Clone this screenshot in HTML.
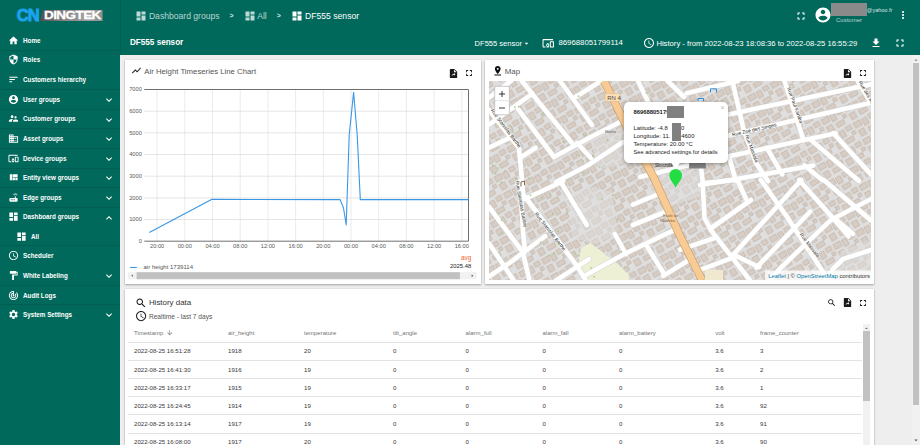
<!DOCTYPE html>
<html><head><meta charset="utf-8">
<style>
*{margin:0;padding:0;box-sizing:border-box}
html,body{width:920px;height:445px;overflow:hidden;background:#eeeeee;font-family:"Liberation Sans",sans-serif}
.a{position:absolute}
.t{position:absolute;white-space:nowrap;line-height:1}
svg.i{position:absolute;display:block}
#side{left:0;top:0;width:120px;height:445px;background:#00695c}
#top{left:120px;top:0;width:800px;height:54.7px;background:#00695c}
.sep{position:absolute;left:0;width:120px;height:1px;background:rgba(0,0,0,0.1)}
.si{position:absolute;font-size:6.3px;font-weight:bold;color:#fff;white-space:nowrap;line-height:1}
.card{position:absolute;background:#fff;box-shadow:0 1px 2px rgba(0,0,0,.3),0 0 1px rgba(0,0,0,.18)}

</style></head><body>
<div id="side" class="a">
<div class="sep" style="top:49.5px"></div>
<div class="sep" style="top:89.0px"></div>
<div class="sep" style="top:108.7px"></div>
<div class="sep" style="top:128.4px"></div>
<div class="sep" style="top:147.9px"></div>
<div class="sep" style="top:167.7px"></div>
<div class="sep" style="top:187.2px"></div>
<div class="sep" style="top:206.8px"></div>
<div class="sep" style="top:245.4px"></div>
<div class="sep" style="top:285.0px"></div>
<div class="sep" style="top:304.2px"></div>
<svg class="i" style="left:8px;top:34.5px" width="11" height="11" viewBox="0 0 24 24"><path fill="#fff" d="M10 20v-6h4v6h5v-8h3L12 3 2 12h3v8z"/></svg>
<div class="si" style="left:23px;top:37.5px">Home</div>
<svg class="i" style="left:8px;top:54.3px" width="11" height="11" viewBox="0 0 24 24"><path fill="#fff" d="M12 1L3 5v6c0 5.55 3.84 10.74 9 12 5.16-1.26 9-6.450 9-12V5l-9-4zm0 10.99h7c-.53 4.12-3.28 7.79-7 8.94V12H5V6.3l7-3.11v8.8z"/></svg>
<div class="si" style="left:23px;top:57.3px">Roles</div>
<svg class="i" style="left:8px;top:74.0px" width="11" height="11" viewBox="0 0 24 24"><path fill="#fff" d="M3 18h6v-2H3v2zM3 6v2h18V6H3zm0 7h12v-2H3v2z"/></svg>
<div class="si" style="left:23px;top:77.0px">Customers hierarchy</div>
<svg class="i" style="left:8px;top:93.7px" width="11" height="11" viewBox="0 0 24 24"><path fill="#fff" d="M12 2C6.48 2 2 6.48 2 12s4.48 10 10 10 10-4.48 10-10S17.52 2 12 2zm0 3c1.66 0 3 1.340 3 3s-1.34 3-3 3-3-1.34-3-3 1.34-3 3-3zm0 14.2c-2.5 0-4.71-1.28-6-3.22.03-1.99 4-3.08 6-3.08 1.99 0 5.97 1.09 6 3.08-1.29 1.94-3.5 3.22-6 3.22z"/></svg>
<div class="si" style="left:23px;top:96.7px">User groups</div>
<svg class="i" style="left:102.5px;top:93.9px" width="12" height="12" viewBox="0 0 24 24"><path fill="#fff" d="M16.59 8.59L12 13.17 7.41 8.59 6 10l6 6 6-6z"/></svg>
<svg class="i" style="left:8px;top:113.3px" width="11" height="11" viewBox="0 0 24 24"><path fill="#fff" d="M16.5 12c1.38 0 2.49-1.12 2.49-2.5S17.88 7 16.5 7C15.12 7 14 8.12 14 9.5s1.12 2.5 2.5 2.5zM9 11c1.66 0 2.99-1.34 2.99-3S10.66 5 9 5C7.34 5 6 6.34 6 8s1.34 3 3 3zm7.5 3c-1.83 0-5.5.92-5.5 2.75V19h11v-2.25c0-1.83-3.67-2.75-5.5-2.75zM9 13c-2.33 0-7 1.17-7 3.5V19h7v-2.25c0-.85.33-2.34 2.37-3.47C10.5 13.1 9.66 13 9 13z"/></svg>
<div class="si" style="left:23px;top:116.3px">Customer groups</div>
<svg class="i" style="left:102.5px;top:113.5px" width="12" height="12" viewBox="0 0 24 24"><path fill="#fff" d="M16.59 8.59L12 13.17 7.41 8.59 6 10l6 6 6-6z"/></svg>
<svg class="i" style="left:8px;top:132.9px" width="11" height="11" viewBox="0 0 24 24"><path fill="#fff" d="M12 7V3H2v18h20V7H12zM6 19H4v-2h2v2zm0-4H4v-2h2v2zm0-4H4V9h2v2zm0-4H4V5h2v2zm4 12H8v-2h2v2zm0-4H8v-2h2v2zm0-4H8V9h2v2zm0-4H8V5h2v2zm10 12h-8v-2h2v-2h-2v-2h2v-2h-2V9h8v10zm-2-8h-2v2h2v-2zm0 4h-2v2h2v-2z"/></svg>
<div class="si" style="left:23px;top:135.9px">Asset groups</div>
<svg class="i" style="left:102.5px;top:133.1px" width="12" height="12" viewBox="0 0 24 24"><path fill="#fff" d="M16.59 8.59L12 13.17 7.41 8.59 6 10l6 6 6-6z"/></svg>
<svg class="i" style="left:8px;top:152.5px" width="11" height="11" viewBox="0 0 24 24"><path fill="#fff" d="M3 6h18V4H3c-1.1 0-2 .9-2 2v12c0 1.1.9 2 2 2h4v-2H3V6zm10 6H9v1.78c-.61.55-1 1.33-1 2.22s.39 1.67 1 2.22V20h4v-1.78c.61-.55 1-1.34 1-2.22s-.39-1.67-1-2.22V12zm-2 5.5c-.83 0-1.5-.67-1.5-1.5s.67-1.5 1.5-1.5 1.5.67 1.5 1.5-.67 1.5-1.5 1.5zM22 8h-6c-.5 0-1 .5-1 1v10c0 .5.5 1 1 1h6c.5 0 1-.5 1-1V9c0-.5-.5-1-1-1zm-1 10h-4v-8h4v8z"/></svg>
<div class="si" style="left:23px;top:155.5px">Device groups</div>
<svg class="i" style="left:102.5px;top:152.7px" width="12" height="12" viewBox="0 0 24 24"><path fill="#fff" d="M16.59 8.59L12 13.17 7.41 8.59 6 10l6 6 6-6z"/></svg>
<svg class="i" style="left:8px;top:172.1px" width="11" height="11" viewBox="0 0 24 24"><path fill="#fff" d="M10 18h5v-6h-5v6zm-6 0h5V5H4v13zm12 0h5v-6h-5v6zM10 5v6h11V5H10z"/></svg>
<div class="si" style="left:23px;top:175.1px">Entity view groups</div>
<svg class="i" style="left:102.5px;top:172.3px" width="12" height="12" viewBox="0 0 24 24"><path fill="#fff" d="M16.59 8.59L12 13.17 7.41 8.59 6 10l6 6 6-6z"/></svg>
<svg class="i" style="left:8px;top:191.7px" width="11" height="11" viewBox="0 0 24 24"><path fill="#fff" d="M20.2 5.9l.8-.8C19.6 3.7 17.8 3 16 3s-3.6.7-5 2.1l.8.8C13 4.8 14.5 4.2 16 4.2s3 .6 4.2 1.700zm-.9.8c-.9-.9-2.1-1.4-3.3-1.4s-2.4.5-3.3 1.4l.8.8c.7-.7 1.6-1 2.5-1 .9 0 1.8.3 2.5 1l.8-.8zM19 13h-2V9h-2v4H5c-1.1 0-2 .9-2 2v4c0 1.1.9 2 2 2h14c1.1 0 2-.9 2-2v-4c0-1.1-.9-2-2-2zM8 18H6v-2h2v2zm3.5 0h-2v-2h2v2zm3.5 0h-2v-2h2v2z"/></svg>
<div class="si" style="left:23px;top:194.7px">Edge groups</div>
<svg class="i" style="left:102.5px;top:191.9px" width="12" height="12" viewBox="0 0 24 24"><path fill="#fff" d="M16.59 8.59L12 13.17 7.41 8.59 6 10l6 6 6-6z"/></svg>
<svg class="i" style="left:8px;top:211.3px" width="11" height="11" viewBox="0 0 24 24"><path fill="#fff" d="M3 13h8V3H3v10zm0 8h8v-6H3v6zm10 0h8V11h-8v10zm0-18v6h8V3h-8z"/></svg>
<div class="si" style="left:23px;top:214.3px">Dashboard groups</div>
<svg class="i" style="left:102.5px;top:211.5px" width="12" height="12" viewBox="0 0 24 24"><path fill="#fff" d="M12 8l-6 6 1.41 1.41L12 10.83l4.59 4.58L18 14z"/></svg>
<svg class="i" style="left:16px;top:230.7px" width="11" height="11" viewBox="0 0 24 24"><path fill="#fff" d="M3 13h8V3H3v10zm0 8h8v-6H3v6zm10 0h8V11h-8v10zm0-18v6h8V3h-8z"/></svg>
<div class="si" style="left:31px;top:233.7px">All</div>
<svg class="i" style="left:8px;top:250.1px" width="11" height="11" viewBox="0 0 24 24"><path fill="#fff" d="M11.99 2C6.47 2 2 6.48 2 12s4.47 10 9.99 10C17.52 22 22 17.52 22 12S17.52 2 11.99 2zM12 20c-4.42 0-8-3.58-8-8s3.58-8 8-8 8 3.58 8 8-3.58 8-8 8zm.5-13H11v6l5.25 3.15.75-1.23-4.5-2.67z"/></svg>
<div class="si" style="left:23px;top:253.1px">Scheduler</div>
<svg class="i" style="left:8px;top:269.8px" width="11" height="11" viewBox="0 0 24 24"><path fill="#fff" d="M18 4V3c0-.55-.45-1-1-1H5c-.55 0-1 .45-1 1v4c0 .55.45 1 1 1h12c.55 0 1-.45 1-1V6h1v4H9v11c0 .55.45 1 1 1h2c.55 0 1-.45 1-1v-9h8V4h-3z"/></svg>
<div class="si" style="left:23px;top:272.8px">White Labeling</div>
<svg class="i" style="left:102.5px;top:270.0px" width="12" height="12" viewBox="0 0 24 24"><path fill="#fff" d="M16.59 8.59L12 13.17 7.41 8.59 6 10l6 6 6-6z"/></svg>
<svg class="i" style="left:8px;top:289.5px" width="11" height="11" viewBox="0 0 24 24"><path fill="#fff" d="M19.07 4.93l-1.41 1.41C19.1 7.79 20 9.79 20 12c0 4.42-3.58 8-8 8s-8-3.58-8-8c0-4.08 3.05-7.44 7-7.93v2.02C8.16 6.57 6 9.03 6 12c0 3.31 2.69 6 6 6s6-2.690 6-6c0-1.66-.67-3.16-1.76-4.24l-1.41 1.41C15.55 9.9 16 10.9 16 12c0 2.21-1.79 4-4 4s-4-1.79-4-4c0-1.86 1.28-3.41 3-3.86v2.14c-.6.35-1 .98-1 1.72 0 1.1.9 2 2 2s2-.9 2-2c0-.74-.4-1.38-1-1.72V2h-1C6.48 2 2 6.48 2 12s4.48 10 10 10 10-4.48 10-10c0-2.76-1.12-5.26-2.93-7.070z"/></svg>
<div class="si" style="left:23px;top:292.5px">Audit Logs</div>
<svg class="i" style="left:8px;top:309.2px" width="11" height="11" viewBox="0 0 24 24"><path fill="#fff" d="M19.14 12.94c.04-.3.06-.61.06-.94 0-.32-.02-.64-.07-.94l2.03-1.58c.18-.14.23-.41.12-.61l-1.92-3.32c-.12-.22-.37-.29-.59-.22l-2.39.96c-.5-.38-1.03-.7-1.62-.94l-.36-2.54c-.04-.24-.24-.41-.48-.41h-3.84c-.24 0-.43.17-.47.41l-.36 2.54c-.59.24-1.13.57-1.62.94l-2.39-.96c-.22-.08-.47 0-.59.22L2.74 8.870c-.12.21-.08.47.12.61l2.03 1.58c-.05.3-.09.63-.09.94s.02.64.07.94l-2.03 1.58c-.18.14-.23.41-.12.61l1.92 3.32c.12.22.37.29.59.22l2.39-.96c.5.38 1.03.7 1.62.94l.36 2.54c.05.24.24.41.48.41h3.84c.24 0 .44-.17.47-.41l.36-2.54c.59-.24 1.13-.56 1.62-.94l2.39.96c.22.08.47 0 .59-.22l1.92-3.32c.12-.22.07-.47-.12-.61l-2.01-1.58zM12 15.6c-1.98 0-3.6-1.62-3.6-3.6s1.62-3.6 3.6-3.6 3.6 1.62 3.6 3.6-1.62 3.6-3.6 3.6z"/></svg>
<div class="si" style="left:23px;top:312.2px">System Settings</div>
<svg class="i" style="left:102.5px;top:309.4px" width="12" height="12" viewBox="0 0 24 24"><path fill="#fff" d="M16.59 8.59L12 13.17 7.41 8.59 6 10l6 6 6-6z"/></svg>
</div>
<div id="top" class="a"></div>
<div class="a" style="left:119.5px;top:0;width:1px;height:54.7px;background:rgba(0,0,0,0.08)"></div>
<!-- logo -->
<div class="t" style="left:16.8px;top:7.2px;font-size:16.5px;font-weight:bold;color:#1ba3ee;letter-spacing:-0.9px;-webkit-text-stroke:0.9px #1ba3ee">CN</div>
<div class="a" style="left:39.6px;top:9.6px;width:63px;height:11.6px;background:linear-gradient(90deg,#4f4f4f,#8a8a8a 45%,#a0a0a0 80%,#8c8c8c);clip-path:polygon(3.5px 0,100% 0,100% 100%,0 100%)"></div>
<div class="t" style="left:43.8px;top:10px;font-size:11.8px;font-weight:bold;color:#fff;letter-spacing:-0.5px;-webkit-text-stroke:0.3px #fff;transform:scaleX(1.145);transform-origin:0 0">DINGTEK</div>
<!-- breadcrumb -->
<svg class="i" style="left:134.6px;top:9.8px" width="12" height="12" viewBox="0 0 24 24"><path fill="rgba(255,255,255,0.75)" d="M3 13h8V3H3v10zm0 8h8v-6H3v6zm10 0h8V11h-8v10zm0-18v6h8V3h-8z"/></svg>
<div class="t" style="left:148.9px;top:11.8px;font-size:8.6px;color:rgba(255,255,255,0.72)">Dashboard groups</div>
<div class="t" style="left:229.5px;top:11.5px;font-size:7px;font-weight:bold;color:rgba(255,255,255,0.85)">&gt;</div>
<svg class="i" style="left:243.5px;top:9.8px" width="12" height="12" viewBox="0 0 24 24"><path fill="rgba(255,255,255,0.75)" d="M3 13h8V3H3v10zm0 8h8v-6H3v6zm10 0h8V11h-8v10zm0-18v6h8V3h-8z"/></svg>
<div class="t" style="left:257.2px;top:11.8px;font-size:8.6px;color:rgba(255,255,255,0.72)">All</div>
<div class="t" style="left:276.8px;top:11.5px;font-size:7px;font-weight:bold;color:rgba(255,255,255,0.85)">&gt;</div>
<svg class="i" style="left:290.8px;top:9.8px" width="12" height="12" viewBox="0 0 24 24"><path fill="#fff" d="M3 13h8V3H3v10zm0 8h8v-6H3v6zm10 0h8V11h-8v10zm0-18v6h8V3h-8z"/></svg>
<div class="t" style="left:305.1px;top:11.8px;font-size:8.6px;color:#fff">DF555 sensor</div>
<!-- top right -->
<svg class="i" style="left:795.3px;top:9.5px" width="12" height="12" viewBox="0 0 24 24"><path fill="#fff" d="M7 14H5v5h5v-2H7v-3zm-2-4h2V7h3V5H5v5zm12 7h-3v2h5v-5h-2v3zM14 5v2h3v3h2V5h-5z"/></svg>
<svg class="i" style="left:814px;top:6.2px" width="18" height="18" viewBox="0 0 24 24"><path fill="#fff" d="M12 2C6.48 2 2 6.48 2 12s4.48 10 10 10 10-4.48 10-10S17.52 2 12 2zm0 3c1.66 0 3 1.34 3 3s-1.34 3-3 3-3-1.34-3-3 1.34-3 3-3zm0 14.2c-2.5 0-4.71-1.28-6-3.22.03-1.99 4-3.08 6-3.08 1.99 0 5.97 1.09 6 3.08-1.29 1.94-3.5 3.22-6 3.22z"/></svg>
<div class="a" style="left:831px;top:3.1px;width:36px;height:12.7px;background:#8a8a8a"></div>
<div class="t" style="left:866.8px;top:8.2px;font-size:5.5px;color:rgba(255,255,255,0.85)">@yahoo.fr</div>
<div class="t" style="left:836px;top:17px;font-size:6px;color:rgba(255,255,255,0.7)">Customer</div>
<svg class="i" style="left:897px;top:9.2px" width="12" height="12" viewBox="0 0 24 24"><path fill="#fff" d="M12 8c1.1 0 2-.9 2-2s-.9-2-2-2-2 .9-2 2 .9 2 2 2zm0 2c-1.1 0-2 .9-2 2s.9 2 2 2 2-.9 2-2-.9-2-2-2zm0 6c-1.1 0-2 .9-2 2s.9 2 2 2 2-.9 2-2-.9-2-2-2z"/></svg>
<!-- toolbar -->
<div class="t" style="left:129.9px;top:38.3px;font-size:8.9px;font-weight:bold;color:#fff;transform:scaleX(0.915);transform-origin:0 0">DF555 sensor</div>
<div class="t" style="left:474.6px;top:39.6px;font-size:7.56px;color:#fff">DF555 sensor</div>
<svg class="i" style="left:521.9px;top:38.8px" width="9" height="9" viewBox="0 0 24 24"><path fill="#fff" d="M7 10l5 5 5-5z"/></svg>
<svg class="i" style="left:542.2px;top:37.2px" width="12.5" height="12.5" viewBox="0 0 24 24"><path fill="#fff" d="M3 6h18V4H3c-1.1 0-2 .9-2 2v12c0 1.1.9 2 2 2h4v-2H3V6zm10 6H9v1.78c-.61.55-1 1.33-1 2.22s.39 1.67 1 2.22V20h4v-1.78c.61-.55 1-1.34 1-2.22s-.39-1.670-1-2.22V12zm-2 5.5c-.83 0-1.5-.67-1.5-1.5s.67-1.5 1.5-1.5 1.5.67 1.5 1.5-.67 1.5-1.5 1.5zM22 8h-6c-.5 0-1 .5-1 1v10c0 .5.5 1 1 1h6c.5 0 1-.5 1-1V9c0-.5-.5-1-1-1zm-1 10h-4v-8h4v8z"/></svg>
<div class="t" style="left:558.4px;top:39.4px;font-size:7.8px;color:#fff">869688051799114</div>
<svg class="i" style="left:642.5px;top:37px" width="12" height="12" viewBox="0 0 24 24"><path fill="#fff" d="M11.99 2C6.47 2 2 6.48 2 12s4.47 10 9.99 10C17.52 22 22 17.52 22 12S17.52 2 11.99 2zM12 20c-4.42 0-8-3.58-8-8s3.58-8 8-8 8 3.58 8 8-3.58 8-8 8zm.5-13H11v6l5.25 3.15.75-1.23-4.5-2.67z"/></svg>
<div id="hist" class="t" style="left:656.4px;top:39.5px;font-size:7.67px;color:#fff">History - from 2022-08-23 18:08:36 to 2022-08-25 16:55:29</div>
<svg class="i" style="left:869.7px;top:37px" width="12" height="12" viewBox="0 0 24 24"><path fill="#fff" d="M19 9h-4V3H9v6H5l7 7 7-7zM5 18v2h14v-2H5z"/></svg>
<svg class="i" style="left:894.3px;top:37px" width="12" height="12" viewBox="0 0 24 24"><path fill="#fff" d="M7 14H5v5h5v-2H7v-3zm-2-4h2V7h3V5H5v5zm12 7h-3v2h5v-5h-2v3zM14 5v2h3v3h2V5h-5z"/></svg>
<div class="card" style="left:124.8px;top:59.7px;width:356px;height:224.1px"></div>
<svg class="i" style="left:131px;top:65.4px" width="10.9" height="10.9" viewBox="0 0 24 24"><path fill="#222" d="M3.5 18.49l6-6.01 4 4L22 6.92l-1.41-1.41-7.090 7.97-4-4L2 16.99z"/></svg>
<div class="t m" style="left:144.3px;top:68.1px;font-size:7.77px;color:#555">Air Height Timeseries Line Chart</div>
<svg class="i" style="left:447.9px;top:68.1px" width="11" height="11" viewBox="0 0 24 24"><path fill="#1a1a1a" d="M6 2c-1.1 0-2 .9-2 2v16c0 1.1.9 2 2 2h12c1.1 0 2-.9 2-2V8l-6-6H6zm7 1.5L18.5 9H13V3.5z"/><path fill="#fff" d="M8 17.5c1.5-1.2 2.8-2.6 5-2.6v1.8l3-2.9-3-2.9v1.8c-3 .4-4.6 2.4-5 4.8z"/></svg>
<svg class="i" style="left:464px;top:67.9px" width="10" height="10" viewBox="0 0 24 24"><path fill="#1a1a1a" d="M7 14H5v5h5v-2H7v-3zm-2-4h2V7h3V5H5v5zm12 7h-3v2h5v-5h-2v3zM14 5v2h3v3h2V5h-5z"/></svg>
<svg class="i" style="left:0;top:0" width="920" height="445" viewBox="0 0 920 445">
<line x1="157.1" y1="89.5" x2="157.1" y2="241.2" stroke="#e6e6e6" stroke-width="0.8"/>
<line x1="184.8" y1="89.5" x2="184.8" y2="241.2" stroke="#e6e6e6" stroke-width="0.8"/>
<line x1="212.5" y1="89.5" x2="212.5" y2="241.2" stroke="#e6e6e6" stroke-width="0.8"/>
<line x1="240.2" y1="89.5" x2="240.2" y2="241.2" stroke="#e6e6e6" stroke-width="0.8"/>
<line x1="267.9" y1="89.5" x2="267.9" y2="241.2" stroke="#e6e6e6" stroke-width="0.8"/>
<line x1="295.6" y1="89.5" x2="295.6" y2="241.2" stroke="#e6e6e6" stroke-width="0.8"/>
<line x1="323.3" y1="89.5" x2="323.3" y2="241.2" stroke="#e6e6e6" stroke-width="0.8"/>
<line x1="351.0" y1="89.5" x2="351.0" y2="241.2" stroke="#e6e6e6" stroke-width="0.8"/>
<line x1="378.7" y1="89.5" x2="378.7" y2="241.2" stroke="#e6e6e6" stroke-width="0.8"/>
<line x1="406.4" y1="89.5" x2="406.4" y2="241.2" stroke="#e6e6e6" stroke-width="0.8"/>
<line x1="434.1" y1="89.5" x2="434.1" y2="241.2" stroke="#e6e6e6" stroke-width="0.8"/>
<line x1="461.8" y1="89.5" x2="461.8" y2="241.2" stroke="#e6e6e6" stroke-width="0.8"/>
<line x1="144.3" y1="219.5" x2="468.5" y2="219.5" stroke="#dedede" stroke-width="0.8"/>
<line x1="144.3" y1="197.9" x2="468.5" y2="197.9" stroke="#dedede" stroke-width="0.8"/>
<line x1="144.3" y1="176.2" x2="468.5" y2="176.2" stroke="#dedede" stroke-width="0.8"/>
<line x1="144.3" y1="154.5" x2="468.5" y2="154.5" stroke="#dedede" stroke-width="0.8"/>
<line x1="144.3" y1="132.8" x2="468.5" y2="132.8" stroke="#dedede" stroke-width="0.8"/>
<line x1="144.3" y1="111.2" x2="468.5" y2="111.2" stroke="#dedede" stroke-width="0.8"/>
<path d="M144.3 89.5H468.5V241.2H144.3" fill="none" stroke="#6f6f6f" stroke-width="1"/>
<polyline fill="none" stroke="#3a97e6" stroke-width="1.1" stroke-linejoin="round" points="149.3,232.4 211.5,199.4 340.1,199.6 343.5,208 346.2,224.9 349.2,135 353.6,92.4 357.2,135 360.3,199.6 468.3,199.6"/>
<line x1="130.1" y1="267.5" x2="136.9" y2="267.5" stroke="#3a97e6" stroke-width="1.1"/>
<rect x="127.8" y="272.2" width="348.8" height="7" fill="#f1f1f1"/>
<rect x="136.6" y="272.2" width="323.3" height="7" fill="#c1c1c1"/>
<path d="M132.9 274.6 L131.3 275.7 L132.9 276.8z" fill="#555"/>
<path d="M471.6 274.4 L473.4 275.7 L471.6 277z" fill="#555"/>
</svg>
<div class="t m" style="right:778.2px;top:239.0px;font-size:5.7px;color:#5a5a5a">0</div>
<div class="t m" style="right:778.2px;top:217.3px;font-size:5.7px;color:#5a5a5a">1000</div>
<div class="t m" style="right:778.2px;top:195.7px;font-size:5.7px;color:#5a5a5a">2000</div>
<div class="t m" style="right:778.2px;top:174.0px;font-size:5.7px;color:#5a5a5a">3000</div>
<div class="t m" style="right:778.2px;top:152.3px;font-size:5.7px;color:#5a5a5a">4000</div>
<div class="t m" style="right:778.2px;top:130.6px;font-size:5.7px;color:#5a5a5a">5000</div>
<div class="t m" style="right:778.2px;top:109.0px;font-size:5.7px;color:#5a5a5a">6000</div>
<div class="t m" style="right:778.2px;top:87.3px;font-size:5.7px;color:#5a5a5a">7000</div>
<div class="t m" style="left:149.9px;width:14.4px;text-align:center;top:244.0px;font-size:5.7px;color:#5a5a5a">20:00</div>
<div class="t m" style="left:177.6px;width:14.4px;text-align:center;top:244.0px;font-size:5.7px;color:#5a5a5a">00:00</div>
<div class="t m" style="left:205.3px;width:14.4px;text-align:center;top:244.0px;font-size:5.7px;color:#5a5a5a">04:00</div>
<div class="t m" style="left:233.0px;width:14.4px;text-align:center;top:244.0px;font-size:5.7px;color:#5a5a5a">08:00</div>
<div class="t m" style="left:260.7px;width:14.4px;text-align:center;top:244.0px;font-size:5.7px;color:#5a5a5a">12:00</div>
<div class="t m" style="left:288.4px;width:14.4px;text-align:center;top:244.0px;font-size:5.7px;color:#5a5a5a">16:00</div>
<div class="t m" style="left:316.1px;width:14.4px;text-align:center;top:244.0px;font-size:5.7px;color:#5a5a5a">20:00</div>
<div class="t m" style="left:343.8px;width:14.4px;text-align:center;top:244.0px;font-size:5.7px;color:#5a5a5a">00:00</div>
<div class="t m" style="left:371.5px;width:14.4px;text-align:center;top:244.0px;font-size:5.7px;color:#5a5a5a">04:00</div>
<div class="t m" style="left:399.2px;width:14.4px;text-align:center;top:244.0px;font-size:5.7px;color:#5a5a5a">08:00</div>
<div class="t m" style="left:426.9px;width:14.4px;text-align:center;top:244.0px;font-size:5.7px;color:#5a5a5a">12:00</div>
<div class="t m" style="left:454.6px;width:14.4px;text-align:center;top:244.0px;font-size:5.7px;color:#5a5a5a">16:00</div>
<div class="t m" style="left:143.5px;top:264.1px;font-size:6.04px;color:#555">air height 1739114</div>
<div class="t m" style="right:448.8px;top:254.6px;font-size:6.4px;color:#f0642d">avg</div>
<div class="t m" style="right:448.8px;top:264.4px;font-size:5.9px;color:#222">2025.48</div><div class="card" style="left:485.2px;top:59.7px;width:388.8px;height:224.1px"></div>
<svg class="i" style="left:492.2px;top:64.6px" width="11.5" height="11.5" viewBox="0 0 24 24"><path fill="#111" d="M18 8c0-3.31-2.69-6-6-6S6 4.69 6 8c0 4.5 6 11 6 11s6-6.5 6-11zm-8 0c0-1.1.9-2 2-2s2 .9 2 2-.89 2-2 2c-1.1 0-2-.9-2-2zM5 20v2h14v-2H5z"/></svg>
<div class="t m" style="left:504.8px;top:67.6px;font-size:7.9px;color:#555">Map</div>
<svg class="i" style="left:841.8px;top:68.2px" width="11" height="11" viewBox="0 0 24 24"><path fill="#1a1a1a" d="M6 2c-1.1 0-2 .9-2 2v16c0 1.1.9 2 2 2h12c1.1 0 2-.9 2-2V8l-6-6H6zm7 1.5L18.5 9H13V3.5z"/><path fill="#fff" d="M8 17.5c1.5-1.2 2.8-2.6 5-2.6v1.8l3-2.9-3-2.9v1.8c-3 .4-4.6 2.4-5 4.8z"/></svg>
<svg class="i" style="left:857.9px;top:68px" width="10" height="10" viewBox="0 0 24 24"><path fill="#1a1a1a" d="M7 14H5v5h5v-2H7v-3zm-2-4h2V7h3V5H5v5zm12 7h-3v2h5v-5h-2v3zM14 5v2h3v3h2V5h-5z"/></svg>
<svg class="i" style="left:489px;top:81px" width="382" height="199" viewBox="489 81 382 199">
<defs>
<pattern id="bld" width="26" height="19" patternUnits="userSpaceOnUse" patternTransform="rotate(-30)">
<rect x="1" y="1.5" width="7.5" height="5.5" fill="#d7cdc4" stroke="#c2b4a8" stroke-width="0.7"/>
<rect x="10.5" y="2" width="5" height="7" fill="#d7cdc4" stroke="#c2b4a8" stroke-width="0.7"/>
<rect x="18" y="1" width="6" height="4.5" fill="#d7cdc4" stroke="#c2b4a8" stroke-width="0.7"/>
<rect x="2" y="10.5" width="6" height="6.5" fill="#d7cdc4" stroke="#c2b4a8" stroke-width="0.7"/>
<rect x="12" y="12" width="8.5" height="4.5" fill="#d7cdc4" stroke="#c2b4a8" stroke-width="0.7"/>
<rect x="21.5" y="8" width="3.5" height="3.5" fill="#d7cdc4" stroke="#c2b4a8" stroke-width="0.7"/>
</pattern>
<clipPath id="mc"><rect x="489" y="81" width="382" height="199"/></clipPath>
</defs>
<rect x="489" y="81" width="382" height="199" fill="#e0dfdf"/>
<rect x="489" y="81" width="382" height="199" fill="url(#bld)"/>
<polygon points="566,195 590,186 612,192 618,235 596,244 572,238" fill="#e0dfdf" opacity="0.5"/>
<polygon points="645,170 668,166 700,172 702,196 676,204 650,200" fill="#e0dfdf" opacity="0.5"/>
<polygon points="590,140 626,125 640,160 598,170" fill="#e0dfdf" opacity="0.5"/>
<polygon points="842,250 871,240 871,280 830,280" fill="#e0dfdf" opacity="0.5"/>
<path d="M578 266 L581 248 L590 243 L596 247 L610 258 L618 264 L628 274 L630 281 L584 281 Z" fill="#eef0d5"/>
<polyline points="522,81 537,100 572,143" fill="none" stroke="#d4d2d0" stroke-width="5.6" stroke-linecap="round" stroke-linejoin="round"/>
<polyline points="518,109 554,157" fill="none" stroke="#d4d2d0" stroke-width="5.6" stroke-linecap="round" stroke-linejoin="round"/>
<polyline points="560,81 592,125" fill="none" stroke="#d4d2d0" stroke-width="5.6" stroke-linecap="round" stroke-linejoin="round"/>
<polyline points="574,98 601,81" fill="none" stroke="#d4d2d0" stroke-width="5.6" stroke-linecap="round" stroke-linejoin="round"/>
<polyline points="554,157 589,138 622,121 650,106" fill="none" stroke="#d4d2d0" stroke-width="5.6" stroke-linecap="round" stroke-linejoin="round"/>
<polyline points="556,182 589,164.7 623,142" fill="none" stroke="#d4d2d0" stroke-width="5.6" stroke-linecap="round" stroke-linejoin="round"/>
<polyline points="640,177 702,162" fill="none" stroke="#d4d2d0" stroke-width="5.6" stroke-linecap="round" stroke-linejoin="round"/>
<polyline points="638,81 650,106" fill="none" stroke="#d4d2d0" stroke-width="5.6" stroke-linecap="round" stroke-linejoin="round"/>
<polyline points="667.7,81 684,97" fill="none" stroke="#d4d2d0" stroke-width="5.6" stroke-linecap="round" stroke-linejoin="round"/>
<polyline points="577,143 591,158" fill="none" stroke="#d4d2d0" stroke-width="5.6" stroke-linecap="round" stroke-linejoin="round"/>
<polyline points="489.3,124.5 532.5,93.5" fill="none" stroke="#d4d2d0" stroke-width="5.6" stroke-linecap="round" stroke-linejoin="round"/>
<polyline points="489,97.7 511,81" fill="none" stroke="#d4d2d0" stroke-width="5.6" stroke-linecap="round" stroke-linejoin="round"/>
<polyline points="489,110 519,148 522,180 523,194 576.6,265.4 585.6,280" fill="none" stroke="#d4d2d0" stroke-width="5.6" stroke-linecap="round" stroke-linejoin="round"/>
<polyline points="489,147.7 510,137.7" fill="none" stroke="#d4d2d0" stroke-width="5.6" stroke-linecap="round" stroke-linejoin="round"/>
<polyline points="522,156.6 535.7,147.7" fill="none" stroke="#d4d2d0" stroke-width="5.6" stroke-linecap="round" stroke-linejoin="round"/>
<polyline points="525,199 563.2,181.1" fill="none" stroke="#d4d2d0" stroke-width="5.6" stroke-linecap="round" stroke-linejoin="round"/>
<polyline points="560.9,182.2 586.8,225" fill="none" stroke="#d4d2d0" stroke-width="5.6" stroke-linecap="round" stroke-linejoin="round"/>
<polyline points="489,207 522.7,252 529.4,280" fill="none" stroke="#d4d2d0" stroke-width="5.6" stroke-linecap="round" stroke-linejoin="round"/>
<polyline points="489,276.6 509.2,263.1 545.2,236.2" fill="none" stroke="#d4d2d0" stroke-width="5.6" stroke-linecap="round" stroke-linejoin="round"/>
<polyline points="555.3,281 589,259" fill="none" stroke="#d4d2d0" stroke-width="5.6" stroke-linecap="round" stroke-linejoin="round"/>
<polyline points="489,243.4 513.7,280.4" fill="none" stroke="#d4d2d0" stroke-width="5.6" stroke-linecap="round" stroke-linejoin="round"/>
<polyline points="520,181 523,231 525,252" fill="none" stroke="#d4d2d0" stroke-width="5.6" stroke-linecap="round" stroke-linejoin="round"/>
<polyline points="583.4,276.6 623.8,254.2 675.5,229.4" fill="none" stroke="#d4d2d0" stroke-width="5.6" stroke-linecap="round" stroke-linejoin="round"/>
<polyline points="614.8,234 626,254.2" fill="none" stroke="#d4d2d0" stroke-width="5.6" stroke-linecap="round" stroke-linejoin="round"/>
<polyline points="632.8,204.7 659.8,193.5" fill="none" stroke="#d4d2d0" stroke-width="5.6" stroke-linecap="round" stroke-linejoin="round"/>
<polyline points="632.8,225 666.5,211.5" fill="none" stroke="#d4d2d0" stroke-width="5.6" stroke-linecap="round" stroke-linejoin="round"/>
<polyline points="646.3,245.2 664.3,274.4" fill="none" stroke="#d4d2d0" stroke-width="5.6" stroke-linecap="round" stroke-linejoin="round"/>
<polyline points="663,276 689,260" fill="none" stroke="#d4d2d0" stroke-width="5.6" stroke-linecap="round" stroke-linejoin="round"/>
<polyline points="686.7,93.2 737.8,81" fill="none" stroke="#d4d2d0" stroke-width="5.6" stroke-linecap="round" stroke-linejoin="round"/>
<polyline points="728.9,114.4 871,84.3" fill="none" stroke="#d4d2d0" stroke-width="5.6" stroke-linecap="round" stroke-linejoin="round"/>
<polyline points="700,141 728.9,135.5 869,103.2" fill="none" stroke="#d4d2d0" stroke-width="5.6" stroke-linecap="round" stroke-linejoin="round"/>
<polyline points="700,162 727.8,156.6 835.7,133.3" fill="none" stroke="#d4d2d0" stroke-width="5.6" stroke-linecap="round" stroke-linejoin="round"/>
<polyline points="700,185 731,180 813.4,165.5" fill="none" stroke="#d4d2d0" stroke-width="5.6" stroke-linecap="round" stroke-linejoin="round"/>
<polyline points="732.3,81 744,131 756,163 768,181" fill="none" stroke="#d4d2d0" stroke-width="5.6" stroke-linecap="round" stroke-linejoin="round"/>
<polyline points="784.5,81 803.4,139.9" fill="none" stroke="#d4d2d0" stroke-width="5.6" stroke-linecap="round" stroke-linejoin="round"/>
<polyline points="857.9,81 871,103.2" fill="none" stroke="#d4d2d0" stroke-width="5.6" stroke-linecap="round" stroke-linejoin="round"/>
<polyline points="833.4,133.3 871,174.4" fill="none" stroke="#d4d2d0" stroke-width="5.6" stroke-linecap="round" stroke-linejoin="round"/>
<polyline points="766.7,147.7 782.3,174.4" fill="none" stroke="#d4d2d0" stroke-width="5.6" stroke-linecap="round" stroke-linejoin="round"/>
<polyline points="804.5,165.5 822.3,180" fill="none" stroke="#d4d2d0" stroke-width="5.6" stroke-linecap="round" stroke-linejoin="round"/>
<polyline points="799.1,180 835,220.4 848.5,236.2" fill="none" stroke="#d4d2d0" stroke-width="5.6" stroke-linecap="round" stroke-linejoin="round"/>
<polyline points="700.5,163 702.5,180 704.5,218 711.5,231 749.7,280" fill="none" stroke="#d4d2d0" stroke-width="5.6" stroke-linecap="round" stroke-linejoin="round"/>
<polyline points="702.5,183.4 734,180" fill="none" stroke="#d4d2d0" stroke-width="5.6" stroke-linecap="round" stroke-linejoin="round"/>
<polyline points="738,181 746,199" fill="none" stroke="#d4d2d0" stroke-width="5.6" stroke-linecap="round" stroke-linejoin="round"/>
<polyline points="736,256 759,267" fill="none" stroke="#d4d2d0" stroke-width="5.6" stroke-linecap="round" stroke-linejoin="round"/>
<polyline points="811,140 859,181" fill="none" stroke="#d4d2d0" stroke-width="5.6" stroke-linecap="round" stroke-linejoin="round"/>
<polyline points="729,157 736,181" fill="none" stroke="#d4d2d0" stroke-width="5.6" stroke-linecap="round" stroke-linejoin="round"/>
<polyline points="710,229 751,200" fill="none" stroke="#d4d2d0" stroke-width="5.6" stroke-linecap="round" stroke-linejoin="round"/>
<polyline points="731.7,256.4 801.3,180" fill="none" stroke="#d4d2d0" stroke-width="5.6" stroke-linecap="round" stroke-linejoin="round"/>
<polyline points="760.9,180 787.9,218.2 828.3,280" fill="none" stroke="#d4d2d0" stroke-width="5.6" stroke-linecap="round" stroke-linejoin="round"/>
<polyline points="756.4,267.6 810.3,211.5" fill="none" stroke="#d4d2d0" stroke-width="5.6" stroke-linecap="round" stroke-linejoin="round"/>
<polyline points="770,280 780,268.5 830.5,220.3 871,199" fill="none" stroke="#d4d2d0" stroke-width="5.6" stroke-linecap="round" stroke-linejoin="round"/>
<polyline points="823.8,180 871,220.4" fill="none" stroke="#d4d2d0" stroke-width="5.6" stroke-linecap="round" stroke-linejoin="round"/>
<polyline points="837.3,220.4 853,233.9" fill="none" stroke="#d4d2d0" stroke-width="5.6" stroke-linecap="round" stroke-linejoin="round"/>
<polyline points="826,281 833,269 843,259 871,250" fill="none" stroke="#d4d2d0" stroke-width="5.6" stroke-linecap="round" stroke-linejoin="round"/>
<polyline points="680,249.7 713.7,238.4" fill="none" stroke="#d4d2d0" stroke-width="5.6" stroke-linecap="round" stroke-linejoin="round"/>
<polyline points="700.2,269.9 736.2,256.4" fill="none" stroke="#d4d2d0" stroke-width="5.6" stroke-linecap="round" stroke-linejoin="round"/>
<polyline points="522,81 537,100 572,143" fill="none" stroke="#ffffff" stroke-width="4.6" stroke-linecap="round" stroke-linejoin="round"/>
<polyline points="518,109 554,157" fill="none" stroke="#ffffff" stroke-width="4.6" stroke-linecap="round" stroke-linejoin="round"/>
<polyline points="560,81 592,125" fill="none" stroke="#ffffff" stroke-width="4.6" stroke-linecap="round" stroke-linejoin="round"/>
<polyline points="574,98 601,81" fill="none" stroke="#ffffff" stroke-width="4.6" stroke-linecap="round" stroke-linejoin="round"/>
<polyline points="554,157 589,138 622,121 650,106" fill="none" stroke="#ffffff" stroke-width="4.6" stroke-linecap="round" stroke-linejoin="round"/>
<polyline points="556,182 589,164.7 623,142" fill="none" stroke="#ffffff" stroke-width="4.6" stroke-linecap="round" stroke-linejoin="round"/>
<polyline points="640,177 702,162" fill="none" stroke="#ffffff" stroke-width="4.6" stroke-linecap="round" stroke-linejoin="round"/>
<polyline points="638,81 650,106" fill="none" stroke="#ffffff" stroke-width="4.6" stroke-linecap="round" stroke-linejoin="round"/>
<polyline points="667.7,81 684,97" fill="none" stroke="#ffffff" stroke-width="4.6" stroke-linecap="round" stroke-linejoin="round"/>
<polyline points="577,143 591,158" fill="none" stroke="#ffffff" stroke-width="4.6" stroke-linecap="round" stroke-linejoin="round"/>
<polyline points="489.3,124.5 532.5,93.5" fill="none" stroke="#ffffff" stroke-width="4.6" stroke-linecap="round" stroke-linejoin="round"/>
<polyline points="489,97.7 511,81" fill="none" stroke="#ffffff" stroke-width="4.6" stroke-linecap="round" stroke-linejoin="round"/>
<polyline points="489,110 519,148 522,180 523,194 576.6,265.4 585.6,280" fill="none" stroke="#ffffff" stroke-width="4.6" stroke-linecap="round" stroke-linejoin="round"/>
<polyline points="489,147.7 510,137.7" fill="none" stroke="#ffffff" stroke-width="4.6" stroke-linecap="round" stroke-linejoin="round"/>
<polyline points="522,156.6 535.7,147.7" fill="none" stroke="#ffffff" stroke-width="4.6" stroke-linecap="round" stroke-linejoin="round"/>
<polyline points="525,199 563.2,181.1" fill="none" stroke="#ffffff" stroke-width="4.6" stroke-linecap="round" stroke-linejoin="round"/>
<polyline points="560.9,182.2 586.8,225" fill="none" stroke="#ffffff" stroke-width="4.6" stroke-linecap="round" stroke-linejoin="round"/>
<polyline points="489,207 522.7,252 529.4,280" fill="none" stroke="#ffffff" stroke-width="4.6" stroke-linecap="round" stroke-linejoin="round"/>
<polyline points="489,276.6 509.2,263.1 545.2,236.2" fill="none" stroke="#ffffff" stroke-width="4.6" stroke-linecap="round" stroke-linejoin="round"/>
<polyline points="555.3,281 589,259" fill="none" stroke="#ffffff" stroke-width="4.6" stroke-linecap="round" stroke-linejoin="round"/>
<polyline points="489,243.4 513.7,280.4" fill="none" stroke="#ffffff" stroke-width="4.6" stroke-linecap="round" stroke-linejoin="round"/>
<polyline points="520,181 523,231 525,252" fill="none" stroke="#ffffff" stroke-width="4.6" stroke-linecap="round" stroke-linejoin="round"/>
<polyline points="583.4,276.6 623.8,254.2 675.5,229.4" fill="none" stroke="#ffffff" stroke-width="4.6" stroke-linecap="round" stroke-linejoin="round"/>
<polyline points="614.8,234 626,254.2" fill="none" stroke="#ffffff" stroke-width="4.6" stroke-linecap="round" stroke-linejoin="round"/>
<polyline points="632.8,204.7 659.8,193.5" fill="none" stroke="#ffffff" stroke-width="4.6" stroke-linecap="round" stroke-linejoin="round"/>
<polyline points="632.8,225 666.5,211.5" fill="none" stroke="#ffffff" stroke-width="4.6" stroke-linecap="round" stroke-linejoin="round"/>
<polyline points="646.3,245.2 664.3,274.4" fill="none" stroke="#ffffff" stroke-width="4.6" stroke-linecap="round" stroke-linejoin="round"/>
<polyline points="663,276 689,260" fill="none" stroke="#ffffff" stroke-width="4.6" stroke-linecap="round" stroke-linejoin="round"/>
<polyline points="686.7,93.2 737.8,81" fill="none" stroke="#ffffff" stroke-width="4.6" stroke-linecap="round" stroke-linejoin="round"/>
<polyline points="728.9,114.4 871,84.3" fill="none" stroke="#ffffff" stroke-width="4.6" stroke-linecap="round" stroke-linejoin="round"/>
<polyline points="700,141 728.9,135.5 869,103.2" fill="none" stroke="#ffffff" stroke-width="4.6" stroke-linecap="round" stroke-linejoin="round"/>
<polyline points="700,162 727.8,156.6 835.7,133.3" fill="none" stroke="#ffffff" stroke-width="4.6" stroke-linecap="round" stroke-linejoin="round"/>
<polyline points="700,185 731,180 813.4,165.5" fill="none" stroke="#ffffff" stroke-width="4.6" stroke-linecap="round" stroke-linejoin="round"/>
<polyline points="732.3,81 744,131 756,163 768,181" fill="none" stroke="#ffffff" stroke-width="4.6" stroke-linecap="round" stroke-linejoin="round"/>
<polyline points="784.5,81 803.4,139.9" fill="none" stroke="#ffffff" stroke-width="4.6" stroke-linecap="round" stroke-linejoin="round"/>
<polyline points="857.9,81 871,103.2" fill="none" stroke="#ffffff" stroke-width="4.6" stroke-linecap="round" stroke-linejoin="round"/>
<polyline points="833.4,133.3 871,174.4" fill="none" stroke="#ffffff" stroke-width="4.6" stroke-linecap="round" stroke-linejoin="round"/>
<polyline points="766.7,147.7 782.3,174.4" fill="none" stroke="#ffffff" stroke-width="4.6" stroke-linecap="round" stroke-linejoin="round"/>
<polyline points="804.5,165.5 822.3,180" fill="none" stroke="#ffffff" stroke-width="4.6" stroke-linecap="round" stroke-linejoin="round"/>
<polyline points="799.1,180 835,220.4 848.5,236.2" fill="none" stroke="#ffffff" stroke-width="4.6" stroke-linecap="round" stroke-linejoin="round"/>
<polyline points="700.5,163 702.5,180 704.5,218 711.5,231 749.7,280" fill="none" stroke="#ffffff" stroke-width="4.6" stroke-linecap="round" stroke-linejoin="round"/>
<polyline points="702.5,183.4 734,180" fill="none" stroke="#ffffff" stroke-width="4.6" stroke-linecap="round" stroke-linejoin="round"/>
<polyline points="738,181 746,199" fill="none" stroke="#ffffff" stroke-width="4.6" stroke-linecap="round" stroke-linejoin="round"/>
<polyline points="736,256 759,267" fill="none" stroke="#ffffff" stroke-width="4.6" stroke-linecap="round" stroke-linejoin="round"/>
<polyline points="811,140 859,181" fill="none" stroke="#ffffff" stroke-width="4.6" stroke-linecap="round" stroke-linejoin="round"/>
<polyline points="729,157 736,181" fill="none" stroke="#ffffff" stroke-width="4.6" stroke-linecap="round" stroke-linejoin="round"/>
<polyline points="710,229 751,200" fill="none" stroke="#ffffff" stroke-width="4.6" stroke-linecap="round" stroke-linejoin="round"/>
<polyline points="731.7,256.4 801.3,180" fill="none" stroke="#ffffff" stroke-width="4.6" stroke-linecap="round" stroke-linejoin="round"/>
<polyline points="760.9,180 787.9,218.2 828.3,280" fill="none" stroke="#ffffff" stroke-width="4.6" stroke-linecap="round" stroke-linejoin="round"/>
<polyline points="756.4,267.6 810.3,211.5" fill="none" stroke="#ffffff" stroke-width="4.6" stroke-linecap="round" stroke-linejoin="round"/>
<polyline points="770,280 780,268.5 830.5,220.3 871,199" fill="none" stroke="#ffffff" stroke-width="4.6" stroke-linecap="round" stroke-linejoin="round"/>
<polyline points="823.8,180 871,220.4" fill="none" stroke="#ffffff" stroke-width="4.6" stroke-linecap="round" stroke-linejoin="round"/>
<polyline points="837.3,220.4 853,233.9" fill="none" stroke="#ffffff" stroke-width="4.6" stroke-linecap="round" stroke-linejoin="round"/>
<polyline points="826,281 833,269 843,259 871,250" fill="none" stroke="#ffffff" stroke-width="4.6" stroke-linecap="round" stroke-linejoin="round"/>
<polyline points="680,249.7 713.7,238.4" fill="none" stroke="#ffffff" stroke-width="4.6" stroke-linecap="round" stroke-linejoin="round"/>
<polyline points="700.2,269.9 736.2,256.4" fill="none" stroke="#ffffff" stroke-width="4.6" stroke-linecap="round" stroke-linejoin="round"/>
<polyline points="604,81 631,135 655,180 680,236 702,280" fill="none" stroke="#c9a06b" stroke-width="8.2"/>
<polyline points="604,81 631,135 655,180 680,236 702,280" fill="none" stroke="#f8cb95" stroke-width="6.8"/>
<rect x="605" y="93.5" width="15" height="8" rx="1" fill="#f9deb8" stroke="#d8b88f" stroke-width="0.5"/>
<text x="607.2" y="99.8" font-family="Liberation Sans" font-size="6" fill="#5a4a3a">RN 4</text>
<text x="490.5" y="110.5" transform="rotate(53 490.5 110.5)" font-family="Liberation Sans" font-size="5" fill="#1a1a1a" stroke="#fff" stroke-width="1.1" paint-order="stroke">Rue Stanislas Barthe</text>
<text x="515.5" y="181" transform="rotate(80 515.5 181)" font-family="Liberation Sans" font-size="5" fill="#1a1a1a" stroke="#fff" stroke-width="1.1" paint-order="stroke">Rue Stanislas Barthe</text>
<text x="534.5" y="214" transform="rotate(52 534.5 214)" font-family="Liberation Sans" font-size="5" fill="#1a1a1a" stroke="#fff" stroke-width="1.1" paint-order="stroke">Rue Stanislas Barthe</text>
<text x="732.5" y="136.5" transform="rotate(-13 732.5 136.5)" font-family="Liberation Sans" font-size="5" fill="#1a1a1a" stroke="#fff" stroke-width="1.1" paint-order="stroke">Rue Zoé des Singes</text>
<text x="787" y="88" transform="rotate(70 787 88)" font-family="Liberation Sans" font-size="5" fill="#1a1a1a" stroke="#fff" stroke-width="1.1" paint-order="stroke">Rue Paul Kamba</text>
<text x="745" y="135.5" transform="rotate(69 745 135.5)" font-family="Liberation Sans" font-size="5" fill="#1a1a1a" stroke="#fff" stroke-width="1.1" paint-order="stroke">Rue Massala</text>
<text x="858.5" y="82" transform="rotate(60 858.5 82)" font-family="Liberation Sans" font-size="5" fill="#1a1a1a" stroke="#fff" stroke-width="1.1" paint-order="stroke">Rue des Mar</text>
<text x="799.5" y="234.5" transform="rotate(53 799.5 234.5)" font-family="Liberation Sans" font-size="5" fill="#1a1a1a" stroke="#fff" stroke-width="1.1" paint-order="stroke">Rue Massala</text>
<text x="605" y="133" font-family="Liberation Sans" font-size="4.2" fill="#666">Mairie</text>
<text x="663" y="217" font-family="Liberation Sans" font-size="4" fill="#8a6a3a">Ecole de</text>
<text x="660" y="222" font-family="Liberation Sans" font-size="4" fill="#8a6a3a">Nkombo</text>
<path d="M521 186.5v-4.5l3.5-1v4.2" fill="none" stroke="#7a5520" stroke-width="0.9"/>
<path d="M710.5 92.3V88.8H716.5V92.3M698 101V98.5H703.5V101" stroke="#2a8ad8" stroke-width="1" fill="none"/>
<circle cx="713.7" cy="279" r="2.5" fill="#d8222a"/>
<rect x="705" y="270" width="18" height="10" fill="#f1e9cf"/>
<circle cx="543.2" cy="113.3" r="0.85" fill="#9fcf8f"/>
<circle cx="594.8" cy="98.1" r="0.85" fill="#9fcf8f"/>
<circle cx="576.7" cy="154.9" r="0.85" fill="#9fcf8f"/>
<circle cx="501.2" cy="182.4" r="0.85" fill="#9fcf8f"/>
<circle cx="497.9" cy="168.1" r="0.85" fill="#9fcf8f"/>
<circle cx="503.0" cy="101.6" r="0.85" fill="#9fcf8f"/>
<circle cx="559.1" cy="244.4" r="0.85" fill="#9fcf8f"/>
<circle cx="511.6" cy="127.3" r="0.85" fill="#9fcf8f"/>
<circle cx="591.1" cy="267.9" r="0.85" fill="#9fcf8f"/>
<circle cx="583.2" cy="161.0" r="0.85" fill="#9fcf8f"/>
<circle cx="646.2" cy="93.0" r="0.85" fill="#9fcf8f"/>
<circle cx="514.8" cy="106.9" r="0.85" fill="#9fcf8f"/>
<circle cx="540.7" cy="242.3" r="0.85" fill="#9fcf8f"/>
<circle cx="520.6" cy="196.8" r="0.85" fill="#9fcf8f"/>
<circle cx="592.9" cy="156.2" r="0.85" fill="#9fcf8f"/>
<circle cx="578.5" cy="96.2" r="0.85" fill="#9fcf8f"/>
<circle cx="501.4" cy="124.0" r="0.85" fill="#9fcf8f"/>
<circle cx="599.5" cy="167.0" r="0.85" fill="#9fcf8f"/>
<circle cx="541.6" cy="197.6" r="0.85" fill="#9fcf8f"/>
<circle cx="563.6" cy="142.2" r="0.85" fill="#9fcf8f"/>
<circle cx="617.5" cy="219.6" r="0.85" fill="#9fcf8f"/>
<circle cx="530.6" cy="195.4" r="0.85" fill="#9fcf8f"/>
<circle cx="575.0" cy="253.8" r="0.85" fill="#9fcf8f"/>
<circle cx="607.3" cy="139.9" r="0.85" fill="#9fcf8f"/>
<circle cx="558.1" cy="230.9" r="0.85" fill="#9fcf8f"/>
<circle cx="516.0" cy="178.9" r="0.85" fill="#9fcf8f"/>
<circle cx="498.2" cy="213.6" r="0.85" fill="#9fcf8f"/>
<circle cx="612.8" cy="195.2" r="0.85" fill="#9fcf8f"/>
<circle cx="601.9" cy="199.3" r="0.85" fill="#9fcf8f"/>
<circle cx="583.6" cy="172.5" r="0.85" fill="#9fcf8f"/>
<circle cx="624.7" cy="267.3" r="0.85" fill="#9fcf8f"/>
<circle cx="566.9" cy="212.8" r="0.85" fill="#9fcf8f"/>
<circle cx="501.6" cy="220.1" r="0.85" fill="#9fcf8f"/>
<circle cx="594.2" cy="276.7" r="0.85" fill="#9fcf8f"/>
<circle cx="621.9" cy="139.2" r="0.85" fill="#9fcf8f"/>
<circle cx="553.0" cy="213.7" r="0.85" fill="#9fcf8f"/>
<circle cx="495.6" cy="173.6" r="0.85" fill="#9fcf8f"/>
<circle cx="518.6" cy="106.7" r="0.85" fill="#9fcf8f"/>
<circle cx="501.3" cy="233.0" r="0.85" fill="#9fcf8f"/>
<circle cx="512.4" cy="132.0" r="0.85" fill="#9fcf8f"/>
<circle cx="553.8" cy="253.1" r="0.85" fill="#9fcf8f"/>
<circle cx="504.7" cy="171.1" r="0.85" fill="#9fcf8f"/>
<circle cx="578.8" cy="255.4" r="0.85" fill="#9fcf8f"/>
<circle cx="621.4" cy="251.6" r="0.85" fill="#9fcf8f"/>
<circle cx="536.0" cy="164.6" r="0.85" fill="#9fcf8f"/>
<circle cx="548.7" cy="255.5" r="0.85" fill="#9fcf8f"/>
<circle cx="519.8" cy="129.0" r="0.85" fill="#9fcf8f"/>
<circle cx="528.9" cy="178.1" r="0.85" fill="#9fcf8f"/>
<circle cx="585.1" cy="135.0" r="0.85" fill="#9fcf8f"/>
<circle cx="492.6" cy="165.3" r="0.85" fill="#9fcf8f"/>
<circle cx="550.3" cy="193.9" r="0.85" fill="#9fcf8f"/>
<rect x="494.7" y="86.3" width="14.7" height="28.5" rx="1.5" fill="#fff" stroke="#bbb" stroke-width="0.8"/>
<line x1="494.7" y1="100.6" x2="509.4" y2="100.6" stroke="#ccc" stroke-width="0.5"/>
<path d="M499 94h6M502 91v6" stroke="#222" stroke-width="0.9"/>
<path d="M499 108h6" stroke="#222" stroke-width="0.9"/>
<rect x="765" y="270.5" width="106" height="9.5" fill="rgba(255,255,255,0.8)"/>
<text x="768.3" y="277.8" font-family="Liberation Sans" font-size="5.85" fill="#333"><tspan fill="#0078a8">Leaflet</tspan> | © <tspan fill="#0078a8">OpenStreetMap</tspan> contributors</text>
<path d="M675.7 187.8 C674.5 184 669.4 180.5 669.4 175.2 A6.3 6.3 0 0 1 682 175.2 C682 180.5 676.9 184 675.7 187.8Z" fill="#22dd44"/>
<rect x="689.1" y="162.2" width="16.7" height="6.3" fill="#808080"/>
<text x="655" y="166.5" font-family="Liberation Sans" font-size="4.6" fill="#333">Sionzola</text>
</svg>
<div class="a" style="left:624px;top:101.8px;width:103.7px;height:61.2px;background:#fff;border-radius:5px;box-shadow:0 1px 4px rgba(0,0,0,0.35)"></div>
<div class="a" style="left:671.2px;top:162.4px;width:9px;height:6.5px;background:#fff;clip-path:polygon(0 0,100% 0,50% 100%)"></div>
<div class="t m" style="left:720.4px;top:104px;font-size:7px;color:#b8b8b8">×</div>
<div class="t m" style="left:633.4px;top:109.6px;font-size:5.9px;font-weight:bold;color:#222">869688051799</div>
<div class="a" style="left:666.9px;top:106px;width:17px;height:11.8px;background:#808080"></div>
<div class="t m" style="left:633.4px;top:125.5px;font-size:5.9px;color:#222">Latitude: -4.8<span style="display:inline-block;width:10px"></span>00</div>
<div class="t m" style="left:633.4px;top:133.9px;font-size:5.9px;color:#222">Longitude: 11.<span style="display:inline-block;width:11px"></span>4600</div>
<div class="a" style="left:671.6px;top:123px;width:9px;height:17.7px;background:#808080"></div>
<div class="t m" style="left:633.4px;top:142.2px;font-size:5.9px;color:#222">Temperature: 20.00 °C</div>
<div class="t m" style="left:633.4px;top:150px;font-size:5.72px;color:#222">See advanced settings for details</div><div class="card" style="left:125px;top:289px;width:749.3px;height:170px"></div>
<svg class="i" style="left:134.6px;top:297px" width="12" height="12" viewBox="0 0 24 24"><path fill="#111" d="M15.5 14h-.79l-.28-.27C15.41 12.59 16 11.11 16 9.5 16 5.91 13.09 3 9.5 3S3 5.91 3 9.5 5.91 16 9.5 16c1.61 0 3.09-.59 4.23-1.57l.27.28v.79l5 4.99L20.49 19l-4.99-5zm-6 0C7.01 14 5 11.99 5 9.5S7.01 5 9.5 5 14 7.01 14 9.5 11.99 14 9.5 14z"/></svg>
<div class="t m" style="left:148.9px;top:299.2px;font-size:7.94px;color:#333">History data</div>
<svg class="i" style="left:135.1px;top:309.9px" width="12.2" height="12.2" viewBox="0 0 24 24"><path fill="#222" d="M11.99 2C6.47 2 2 6.48 2 12s4.47 10 9.99 10C17.52 22 22 17.52 22 12S17.52 2 11.99 2zM12 20c-4.42 0-8-3.58-8-8s3.58-8 8-8 8 3.58 8 8-3.58 8-8 8zm.5-13H11v6l5.25 3.15.75-1.23-4.5-2.67z"/></svg>
<div class="t m" style="left:148.9px;top:314.1px;font-size:6.6px;color:#555">Realtime - last 7 days</div>
<svg class="i" style="left:826.8px;top:297.6px" width="9.5" height="9.5" viewBox="0 0 24 24"><path fill="#111" d="M15.5 14h-.79l-.28-.27C15.41 12.59 16 11.11 16 9.5 16 5.91 13.09 3 9.5 3S3 5.91 3 9.5 5.91 16 9.5 16c1.61 0 3.09-.59 4.23-1.57l.27.28v.79l5 4.99L20.49 19l-4.99-5zm-6 0C7.01 14 5 11.99 5 9.5S7.01 5 9.5 5 14 7.01 14 9.5 11.99 14 9.5 14z"/></svg>
<svg class="i" style="left:841.8px;top:297.4px" width="11" height="11" viewBox="0 0 24 24"><path fill="#1a1a1a" d="M6 2c-1.1 0-2 .9-2 2v16c0 1.1.9 2 2 2h12c1.1 0 2-.9 2-2V8l-6-6H6zm7 1.5L18.5 9H13V3.5z"/><path fill="#fff" d="M8 17.5c1.5-1.2 2.8-2.6 5-2.6v1.8l3-2.9-3-2.9v1.8c-3 .4-4.6 2.4-5 4.8z"/></svg>
<svg class="i" style="left:858px;top:297.9px" width="10" height="10" viewBox="0 0 24 24"><path fill="#1a1a1a" d="M7 14H5v5h5v-2H7v-3zm-2-4h2V7h3V5H5v5zm12 7h-3v2h5v-5h-2v3zM14 5v2h3v3h2V5h-5z"/></svg>
<div class="t m" style="left:134px;top:329.7px;font-size:6px;color:#757575">Timestamp</div>
<div class="t m" style="left:228px;top:329.7px;font-size:6px;color:#757575">air_height</div>
<div class="t m" style="left:304px;top:329.7px;font-size:6px;color:#757575">temperature</div>
<div class="t m" style="left:393px;top:329.7px;font-size:6px;color:#757575">tilt_angle</div>
<div class="t m" style="left:465.6px;top:329.7px;font-size:6px;color:#757575">alarm_full</div>
<div class="t m" style="left:542.5px;top:329.7px;font-size:6px;color:#757575">alarm_fall</div>
<div class="t m" style="left:619px;top:329.7px;font-size:6px;color:#757575">alarm_battery</div>
<div class="t m" style="left:715.2px;top:329.7px;font-size:6px;color:#757575">volt</div>
<div class="t m" style="left:760px;top:329.7px;font-size:6px;color:#757575">frame_counter</div>
<svg class="i" style="left:165.8px;top:328.7px" width="7.5" height="7.5" viewBox="0 0 24 24"><path fill="#777" d="M20 12l-1.41-1.41L13 16.17V4h-2v12.17l-5.58-5.59L4 12l8 8 8-8z"/></svg>
<div class="a" style="left:128.4px;top:341.7px;width:733.6px;height:1px;background:#e2e2e2"></div>
<div class="a" style="left:128.4px;top:360.0px;width:733.6px;height:1px;background:#e2e2e2"></div>
<div class="a" style="left:128.4px;top:378.0px;width:733.6px;height:1px;background:#e2e2e2"></div>
<div class="a" style="left:128.4px;top:396.2px;width:733.6px;height:1px;background:#e2e2e2"></div>
<div class="a" style="left:128.4px;top:414.4px;width:733.6px;height:1px;background:#e2e2e2"></div>
<div class="a" style="left:128.4px;top:432.6px;width:733.6px;height:1px;background:#e2e2e2"></div>
<div class="t m" style="left:134px;top:348.4px;font-size:6.1px;color:#383838">2022-08-25 16:51:28</div>
<div class="t m" style="left:228px;top:348.4px;font-size:6.1px;color:#383838">1918</div>
<div class="t m" style="left:304px;top:348.4px;font-size:6.1px;color:#383838">20</div>
<div class="t m" style="left:393px;top:348.4px;font-size:6.1px;color:#383838">0</div>
<div class="t m" style="left:465.6px;top:348.4px;font-size:6.1px;color:#383838">0</div>
<div class="t m" style="left:542.5px;top:348.4px;font-size:6.1px;color:#383838">0</div>
<div class="t m" style="left:619px;top:348.4px;font-size:6.1px;color:#383838">0</div>
<div class="t m" style="left:715.2px;top:348.4px;font-size:6.1px;color:#383838">3.6</div>
<div class="t m" style="left:760px;top:348.4px;font-size:6.1px;color:#383838">3</div>
<div class="t m" style="left:134px;top:366.6px;font-size:6.1px;color:#383838">2022-08-25 16:41:30</div>
<div class="t m" style="left:228px;top:366.6px;font-size:6.1px;color:#383838">1916</div>
<div class="t m" style="left:304px;top:366.6px;font-size:6.1px;color:#383838">19</div>
<div class="t m" style="left:393px;top:366.6px;font-size:6.1px;color:#383838">0</div>
<div class="t m" style="left:465.6px;top:366.6px;font-size:6.1px;color:#383838">0</div>
<div class="t m" style="left:542.5px;top:366.6px;font-size:6.1px;color:#383838">0</div>
<div class="t m" style="left:619px;top:366.6px;font-size:6.1px;color:#383838">0</div>
<div class="t m" style="left:715.2px;top:366.6px;font-size:6.1px;color:#383838">3.6</div>
<div class="t m" style="left:760px;top:366.6px;font-size:6.1px;color:#383838">2</div>
<div class="t m" style="left:134px;top:384.7px;font-size:6.1px;color:#383838">2022-08-25 16:33:17</div>
<div class="t m" style="left:228px;top:384.7px;font-size:6.1px;color:#383838">1915</div>
<div class="t m" style="left:304px;top:384.7px;font-size:6.1px;color:#383838">19</div>
<div class="t m" style="left:393px;top:384.7px;font-size:6.1px;color:#383838">0</div>
<div class="t m" style="left:465.6px;top:384.7px;font-size:6.1px;color:#383838">0</div>
<div class="t m" style="left:542.5px;top:384.7px;font-size:6.1px;color:#383838">0</div>
<div class="t m" style="left:619px;top:384.7px;font-size:6.1px;color:#383838">0</div>
<div class="t m" style="left:715.2px;top:384.7px;font-size:6.1px;color:#383838">3.6</div>
<div class="t m" style="left:760px;top:384.7px;font-size:6.1px;color:#383838">1</div>
<div class="t m" style="left:134px;top:402.9px;font-size:6.1px;color:#383838">2022-08-25 16:24:45</div>
<div class="t m" style="left:228px;top:402.9px;font-size:6.1px;color:#383838">1914</div>
<div class="t m" style="left:304px;top:402.9px;font-size:6.1px;color:#383838">19</div>
<div class="t m" style="left:393px;top:402.9px;font-size:6.1px;color:#383838">0</div>
<div class="t m" style="left:465.6px;top:402.9px;font-size:6.1px;color:#383838">0</div>
<div class="t m" style="left:542.5px;top:402.9px;font-size:6.1px;color:#383838">0</div>
<div class="t m" style="left:619px;top:402.9px;font-size:6.1px;color:#383838">0</div>
<div class="t m" style="left:715.2px;top:402.9px;font-size:6.1px;color:#383838">3.6</div>
<div class="t m" style="left:760px;top:402.9px;font-size:6.1px;color:#383838">92</div>
<div class="t m" style="left:134px;top:421.1px;font-size:6.1px;color:#383838">2022-08-25 16:13:14</div>
<div class="t m" style="left:228px;top:421.1px;font-size:6.1px;color:#383838">1917</div>
<div class="t m" style="left:304px;top:421.1px;font-size:6.1px;color:#383838">19</div>
<div class="t m" style="left:393px;top:421.1px;font-size:6.1px;color:#383838">0</div>
<div class="t m" style="left:465.6px;top:421.1px;font-size:6.1px;color:#383838">0</div>
<div class="t m" style="left:542.5px;top:421.1px;font-size:6.1px;color:#383838">0</div>
<div class="t m" style="left:619px;top:421.1px;font-size:6.1px;color:#383838">0</div>
<div class="t m" style="left:715.2px;top:421.1px;font-size:6.1px;color:#383838">3.6</div>
<div class="t m" style="left:760px;top:421.1px;font-size:6.1px;color:#383838">91</div>
<div class="t m" style="left:134px;top:439.2px;font-size:6.1px;color:#383838">2022-08-25 16:08:00</div>
<div class="t m" style="left:228px;top:439.2px;font-size:6.1px;color:#383838">1917</div>
<div class="t m" style="left:304px;top:439.2px;font-size:6.1px;color:#383838">20</div>
<div class="t m" style="left:393px;top:439.2px;font-size:6.1px;color:#383838">0</div>
<div class="t m" style="left:465.6px;top:439.2px;font-size:6.1px;color:#383838">0</div>
<div class="t m" style="left:542.5px;top:439.2px;font-size:6.1px;color:#383838">0</div>
<div class="t m" style="left:619px;top:439.2px;font-size:6.1px;color:#383838">0</div>
<div class="t m" style="left:715.2px;top:439.2px;font-size:6.1px;color:#383838">3.6</div>
<div class="t m" style="left:760px;top:439.2px;font-size:6.1px;color:#383838">90</div>
<div class="a" style="left:863.4px;top:324px;width:6.8px;height:121px;background:#f1f1f1"></div>
<div class="a" style="left:863.2px;top:330.8px;width:6.6px;height:70.7px;background:#c1c1c1"></div>
<svg class="i" style="left:863.4px;top:325.5px" width="6.8" height="4" viewBox="0 0 7 4"><path d="M2 3L3.5 1.5 5 3z" fill="#777"/></svg><div class="a" style="left:912px;top:54.7px;width:8px;height:391px;background:#f1f1f1"></div>
<div class="a" style="left:912.6px;top:63px;width:6.8px;height:341.7px;background:#c1c1c1"></div>
<svg class="i" style="left:912px;top:56.5px" width="8" height="5" viewBox="0 0 8 5"><path d="M2.3 3.8L4 2 5.7 3.8z" fill="#888"/></svg>
<svg class="i" style="left:912px;top:437.5px" width="8" height="5" viewBox="0 0 8 5"><path d="M2.3 1.5L4 3.3 5.7 1.5z" fill="#555"/></svg>
</body></html>
